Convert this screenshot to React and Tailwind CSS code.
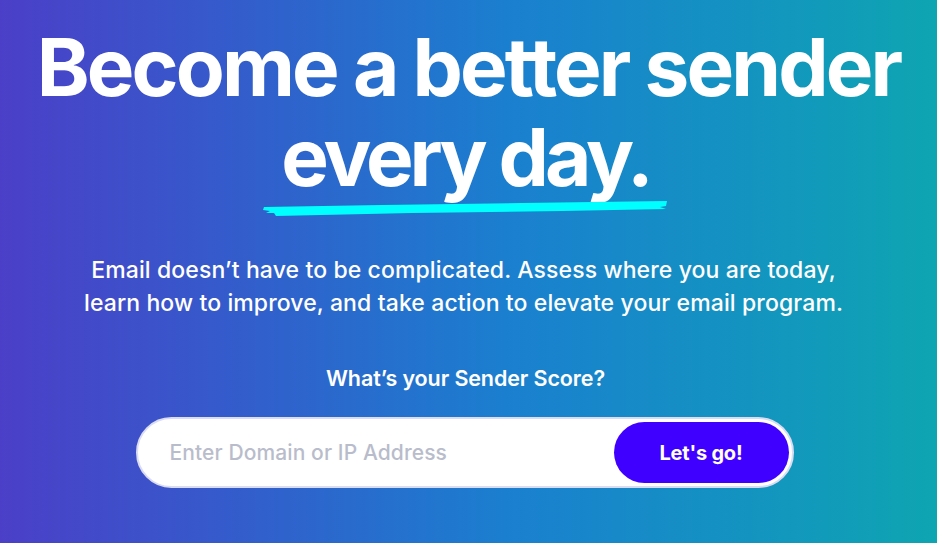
export default function App() {
  return (
    <div
      className="w-[937px] h-[543px] overflow-hidden flex flex-col items-center bg-[linear-gradient(90deg,#4b3fc8_0%,#2f62cc_30%,#1a80cf_55%,#1394c0_80%,#0ea5b1_100%)] text-white"
      style={{ fontFamily: "Inter, 'Noto Sans', sans-serif" }}
    >
      <h1 className="mt-[22px] text-[80px] leading-[90px] font-bold tracking-[-0.036em] text-center whitespace-nowrap">
        Become a better sender
        <br />
        <span className="inline-block tracking-[-0.05em] ml-[-6px]">every day.</span>
      </h1>
      <svg className="-mt-[4px] ml-[-4px]" width="410" height="20" viewBox="0 0 410 20">
        <polygon
          fill="#00ffff"
          points="2,9 120,7 260,5 405,3 404,8 398,9 404,11 300,13 150,15 14,18 12,15 4,15 8,13 1,12"
        />
      </svg>
      <p className="mt-[36px] ml-[-10px] text-[23px] leading-[33px] font-medium text-center tracking-[0.005em]">
        Email doesn’t have to be complicated. Assess where you are today,
        <br />
        learn how to improve, and take action to elevate your email program.
      </p>
      <p className="mt-[45px] ml-[-6px] text-[21.5px] leading-[26px] font-semibold tracking-[-0.005em]">
        What’s your Sender Score?
      </p>
      <div className="mt-[26px] ml-[-8px] w-[658px] h-[71px] rounded-full bg-white border-2 border-[#d9dcf2] flex items-center pl-[32px] pr-[3px]">
        <input
          className="flex-1 bg-transparent outline-none text-[21px] font-medium text-[#333] placeholder:text-[#b9bccb] tracking-[0.005em]"
          placeholder="Enter Domain or IP Address"
        />
        <button className="w-[175px] h-[61px] rounded-full bg-[#4000ff] text-white text-[20px] font-bold tracking-[-0.01em]">
          Let's go!
        </button>
      </div>
    </div>
  );
}
